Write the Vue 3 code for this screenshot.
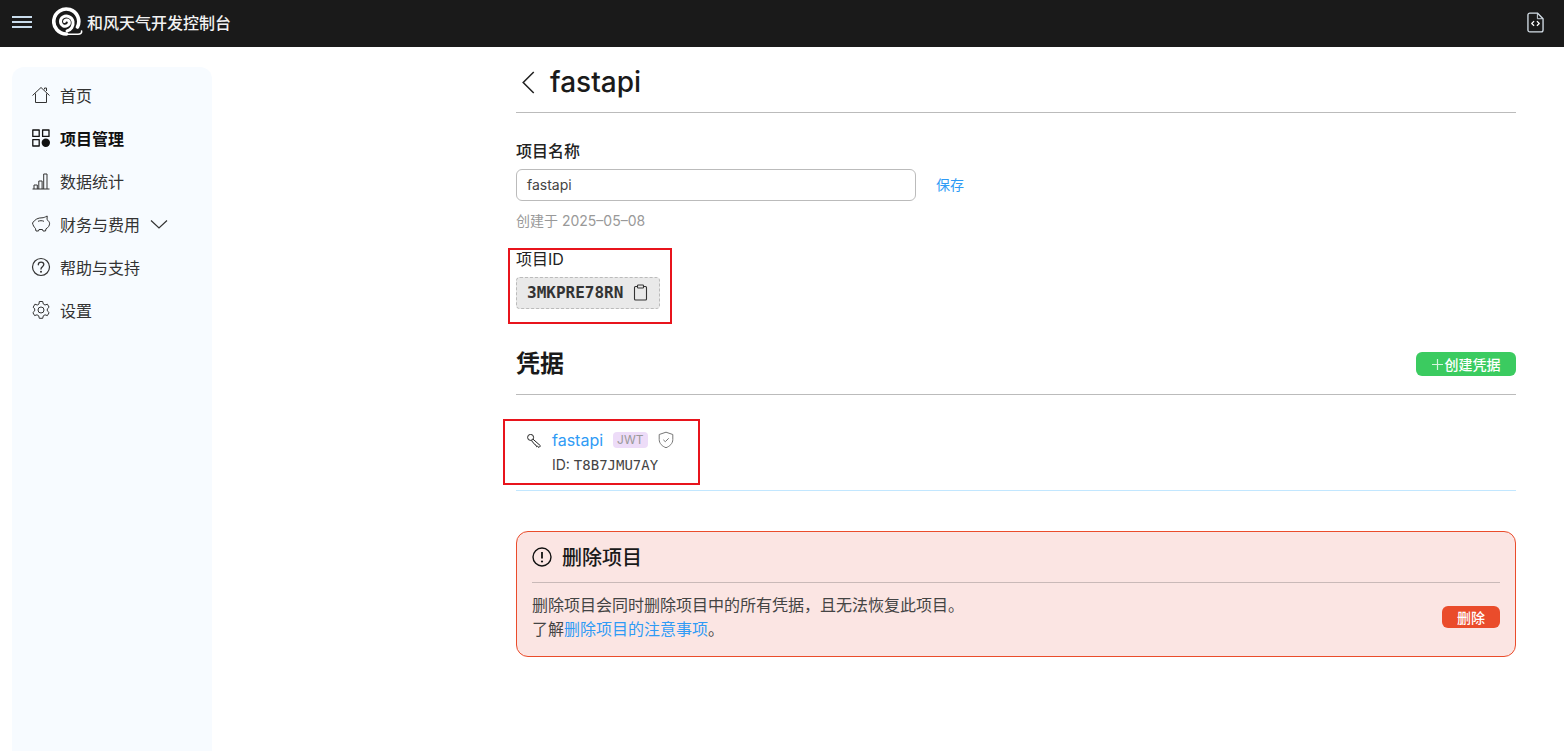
<script setup>
const nav = [
  { key: 'home', label: '首页' },
  { key: 'proj', label: '项目管理', active: true },
  { key: 'stat', label: '数据统计' },
  { key: 'fin', label: '财务与费用', chevron: true },
  { key: 'help', label: '帮助与支持' },
  { key: 'set', label: '设置' },
]
</script>

<template>
  <div class="page">
    <header class="topbar">
      <button class="menu" aria-label="menu"><span></span><span></span><span></span></button>
      <svg class="logo" viewBox="0 0 31 30" fill="none" stroke="#fff" stroke-linecap="round">
        <path d="M14 27.300H26C28.500 27.300 30 26 29.600 24" stroke-width="1.600"/>
        <path d="M14.500 27A12.500 12.500 0 1 1 25.500 20" stroke-width="3.600"/>
        <path d="M12.500 14.500C13 12.300 16.800 12.300 17.300 15C17.800 18 14 20.300 11 18.800C7.800 17 7.500 12 11 10C14.500 8 20 9.500 21 14.500C21.800 19 19 23 15 24" stroke-width="3"/>
      </svg>
      <span class="brand">和风天气开发控制台</span>
      <svg class="doc" viewBox="0 0 18 22" fill="none" stroke="#d5dfe8" stroke-width="1.400" stroke-linejoin="round">
        <path d="M3 1h8l6 6v12a2 2 0 0 1-2 2H3a2 2 0 0 1-2-2V3a2 2 0 0 1 2-2z"/>
        <path d="M11 1.500V7h5.500" stroke-width="1"/>
        <path d="M7.500 9.500 5 12l2.500 2.500M10.500 9.500 13 12l-2.500 2.500" stroke="#fff" stroke-width="1.300"/>
      </svg>
    </header>

    <div class="body">
      <aside class="sidebar">
        <a v-for="n in nav" :key="n.key" class="nav-item" :class="{ active: n.active }">
          <svg class="nav-icon" viewBox="0 0 20 20" fill="none" stroke="#333" stroke-width="1" stroke-linejoin="round">
            <template v-if="n.key === 'home'">
              <path d="M1.500 10.500 10 2.500l8.500 8M4.500 8.500v9h11v-9"/>
              <path d="M13.500 4.300V3h2v3"/>
            </template>
            <template v-else-if="n.key === 'proj'">
              <g stroke="#111" stroke-width="1.300">
                <rect x="1.800" y="2" width="6.400" height="6.400"/>
                <rect x="11.600" y="2" width="6.400" height="6.400"/>
                <rect x="1.800" y="11.600" width="6.400" height="6.400"/>
              </g>
              <circle cx="14.800" cy="14.800" r="4.200" fill="#111" stroke="none"/>
            </template>
            <template v-else-if="n.key === 'stat'">
              <path d="M1.500 18h17M3 18v-4h3.300v4M7.800 18V10h3.300v8M12.700 18V3h3.300v15"/>
            </template>
            <template v-else-if="n.key === 'fin'">
              <path d="M1.500 9C4 5.300 7 3.800 11 3.800c1.500 0 3-.6 5.200-1.800l-.2 3.600c1.300 1 2.300 2.200 2.600 3.600.1 2.400-1.400 4.400-3.600 5.600l-.5 2.200h-2.500l-.5-1.500H8l-.5 1.500H5l-.6-2.600C3 13 2 11.300 1.500 9z"/>
              <path d="M7 7.300c2-.8 4-.8 6 0"/>
            </template>
            <template v-else-if="n.key === 'help'">
              <circle cx="10" cy="10" r="8.500" stroke-width="1.200"/>
              <path d="M7.300 7.800c0-1.700 1.200-2.700 2.800-2.700s2.700 1 2.700 2.400c0 2.200-2.800 2.200-2.800 4.500" stroke-linecap="round" stroke-width="1.300"/>
              <circle cx="10" cy="14.700" r="1" fill="#333" stroke="none"/>
            </template>
            <template v-else>
              <path d="M8.300 1.500h3.400l.6 2.500 1.700 1 2.400-.8 1.700 3-1.800 1.700v2l1.800 1.700-1.700 3-2.400-.8-1.700 1-.6 2.500H8.300l-.6-2.500-1.700-1-2.400.8-1.700-3 1.800-1.700v-2L2.200 7.200l1.700-3 2.400.8 1.700-1z"/>
              <circle cx="10" cy="10" r="3"/>
            </template>
          </svg>
          <span>{{ n.label }}</span>
          <svg v-if="n.chevron" class="chev" viewBox="0 0 18 10" fill="none" stroke="#333" stroke-width="1.200">
            <path d="M1 1.500 9 9l8-7.500"/>
          </svg>
        </a>
      </aside>

      <main class="main">
        <div class="title-row">
          <svg class="back" viewBox="0 0 14 24" fill="none" stroke="#222" stroke-width="1.600"><path d="M13 1 2 12l11 11"/></svg>
          <h1>fastapi</h1>
        </div>

        <div class="label name-label">项目名称</div>
        <div class="name-row">
          <div class="input">fastapi</div>
          <a class="link save">保存</a>
        </div>
        <div class="created">创建于 2025–05–08</div>

        <div class="id-block">
          <div class="label">项目ID</div>
          <div class="chip">
            <span>3MKPRE78RN</span>
            <svg class="clip" viewBox="0 0 15 17" fill="none" stroke="#333" stroke-width="1.100">
              <path d="M4 2.500H2.500a1 1 0 0 0-1 1V15a1 1 0 0 0 1 1h10a1 1 0 0 0 1-1V3.500a1 1 0 0 0-1-1H11"/>
              <rect x="4.500" y="1" width="6" height="3" rx=".8"/>
            </svg>
          </div>
          <i class="mark mark-id"></i>
        </div>

        <div class="cred-head">
          <h2>凭据</h2>
          <button class="create">
            <svg class="plus" viewBox="0 0 11 11" fill="none" stroke="#d6f5df" stroke-width="1.200"><path d="M5.500 0v11M0 5.500h11"/></svg>
            <span>创建凭据</span>
          </button>
        </div>

        <div class="cred">
          <i class="mark mark-cred"></i>
          <svg class="key" viewBox="0 0 14 14" fill="none" stroke="#222" stroke-width="1" stroke-linejoin="round">
            <circle cx="3.600" cy="3.400" r="3"/>
            <path d="M6 5.200 13.500 11.800 12 13.500 10.600 12.300 9.700 12.800 9 11.200 8 10.800 4.400 6.500"/>
          </svg>
          <div class="cred-text">
            <div class="cred-line">
              <a class="link cred-name">fastapi</a>
              <span class="tag">JWT</span>
              <svg class="shield" viewBox="0 0 16 18" fill="none" stroke="#777" stroke-width="1">
                <path d="M8 1.200 14.800 3.500v5c0 4-3 6.800-6.800 8.200C4.200 15.300 1.200 12.500 1.200 8.500v-5z"/>
                <path d="m5.300 8.800 2 1.900 3.400-3.400"/>
              </svg>
            </div>
            <div class="cred-id">ID: <span class="mono">T8B7JMU7AY</span></div>
          </div>
        </div>

        <section class="danger">
          <div class="danger-head">
            <svg class="alert" viewBox="0 0 20 20" fill="none" stroke="#111" stroke-width="1.400">
              <circle cx="10" cy="10" r="9"/>
              <path d="M10 5v6.500" stroke-width="1.800"/>
              <circle cx="10" cy="14.500" r="1.100" fill="#111" stroke="none"/>
            </svg>
            <h3>删除项目</h3>
          </div>
          <div class="danger-body">
            <p>删除项目会同时删除项目中的所有凭据，且无法恢复此项目。<br>了解<a class="link">删除项目的注意事项</a>。</p>
            <button class="del">删除</button>
          </div>
        </section>
      </main>
    </div>
  </div>
</template>

<style>
html, body { margin: 0; background: #fff; overflow: hidden; }
</style>

<style scoped>
.page {
  width: 1564px;
  height: 751px;
  overflow: hidden;
  font-family: Inter, "Noto Sans CJK SC", sans-serif;
  color: #333;
  font-size: 16px;
}
.topbar {
  height: 47px;
  background: #1a1a1a;
  display: flex;
  align-items: center;
  padding: 0 19px 3px 12px;
  box-sizing: border-box;
}
.menu {
  width: 20px;
  padding: 0;
  border: 0;
  background: none;
  display: flex;
  flex-direction: column;
  gap: 3px;
}
.menu span { display: block; height: 2px; background: #c9dcec; }
.logo { width: 31px; height: 30px; margin-left: 20px; }
.brand { margin-left: 4px; color: #f2f2f2; font-size: 16px; font-weight: 500; }
.doc { width: 17px; height: 21px; margin-left: auto; margin-right: 1px; }
.body { display: flex; align-items: stretch; height: 704px; }
.sidebar {
  width: 200px;
  margin: 20px 0 0 12px;
  padding-top: 6px;
  background: #f7fbff;
  border-radius: 12px 12px 0 0;
  box-sizing: border-box;
}
.nav-item {
  height: 43px;
  display: flex;
  align-items: center;
  padding-left: 19px;
  color: #333;
}
.nav-item.active { color: #111; font-weight: 600; }
.nav-icon { width: 20px; height: 20px; margin-right: 9px; flex: none; }
.chev { width: 18px; height: 10px; margin-left: 10px; }
.main { width: 1000px; margin-left: 304px; }
.title-row {
  height: 66px;
  display: flex;
  align-items: center;
  border-bottom: 1px solid #bbb;
  box-sizing: border-box;
  padding-top: 5px;
}
.back { width: 14px; height: 23px; margin-left: 5px; margin-right: 15px; }
h1 { margin: 0; font-size: 28px; font-weight: 500; color: #1a1a1a; }
.label { font-weight: 500; color: #222; line-height: 22px; }
.name-label { margin-top: 27px; }
.name-row { display: flex; align-items: center; margin-top: 7px; }
.input {
  width: 400px;
  height: 32px;
  box-sizing: border-box;
  border: 1px solid #bbb;
  border-radius: 6px;
  padding: 0 10px;
  line-height: 30px;
  font-size: 14px;
  color: #444;
}
.link { color: #2f9bf5; }
.save { font-size: 14px; margin-left: 20px; margin-top: -2px; }
.created { margin-top: 10px; font-size: 14px; line-height: 20px; color: #999; }
.id-block { position: relative; margin-top: 17px; }
.id-block .label { font-weight: 400; }
.chip {
  margin-top: 7px;
  width: 144px;
  height: 32px;
  box-sizing: border-box;
  border: 1px dashed #bbb;
  border-radius: 4px;
  background: #e9e9e9;
  display: flex;
  align-items: center;
  padding: 0 0 1px 10px;
  font-family: "DejaVu Sans Mono", monospace;
  font-weight: 700;
  color: #333;
}
.clip { width: 15px; height: 17px; margin-left: 10px; }
.mark { position: absolute; border: 2px solid #e8141c; box-sizing: border-box; pointer-events: none; }
.mark-id { left: -8px; top: 0; width: 164px; height: 76px; }
.cred-head {
  margin-top: 15px;
  height: 71px;
  border-bottom: 1px solid #bbb;
  display: flex;
  align-items: flex-end;
  justify-content: space-between;
  padding-bottom: 18px;
  box-sizing: border-box;
}
h2 { margin: 0; font-size: 24px; line-height: 24px; font-weight: 600; color: #1a1a1a; }
.create {
  width: 100px;
  height: 24px;
  border: 0;
  border-radius: 6px;
  background: #3bcb60;
  color: #fff;
  font: 500 14px Inter, "Noto Sans CJK SC", sans-serif;
  padding: 0;
  display: flex;
  align-items: center;
  justify-content: center;
  gap: 2px;
}
.plus { width: 11px; height: 11px; }
.cred {
  position: relative;
  height: 96px;
  border-bottom: 1px solid #c2e7ff;
  box-sizing: border-box;
  display: flex;
  padding: 33px 0 0 11px;
}
.mark-cred { left: -13px; top: 24px; width: 197px; height: 66px; }
.key { width: 14px; height: 14px; margin-top: 6px; }
.cred-text { margin-left: 11px; }
.cred-line { display: flex; align-items: center; height: 24px; }
.cred-name { font-size: 16px; }
.tag {
  margin-left: 10px;
  height: 16px;
  line-height: 16px;
  padding: 0 4px;
  border-radius: 4px;
  background: #eddcf8;
  color: #999;
  font-size: 12px;
}
.shield { width: 16px; height: 18px; margin-left: 10px; }
.cred-id { margin-top: 3px; font-size: 14px; line-height: 20px; color: #444; }
.mono { font-family: "DejaVu Sans Mono", monospace; }
.danger {
  margin-top: 40px;
  height: 126px;
  box-sizing: border-box;
  border: 1px solid #ea4c2b;
  border-radius: 12px;
  background: #fbe5e3;
  padding: 0 15px;
}
.danger-head {
  height: 51px;
  display: flex;
  align-items: center;
  gap: 10px;
  border-bottom: 1px solid #c9b9b8;
  box-sizing: border-box;
}
.alert { width: 20px; height: 20px; }
h3 { margin: -2px 0 0; font-size: 20px; font-weight: 500; color: #1a1a1a; }
.danger-body { display: flex; align-items: center; justify-content: space-between; height: 68px; }
.danger-body p { margin: 0; line-height: 24px; color: #444; }
.del {
  width: 58px;
  height: 22px;
  padding: 0;
  border: 0;
  border-radius: 6px;
  background: #ea4c2b;
  color: #fff;
  font: 500 14px Inter, "Noto Sans CJK SC", sans-serif;
}
</style>
